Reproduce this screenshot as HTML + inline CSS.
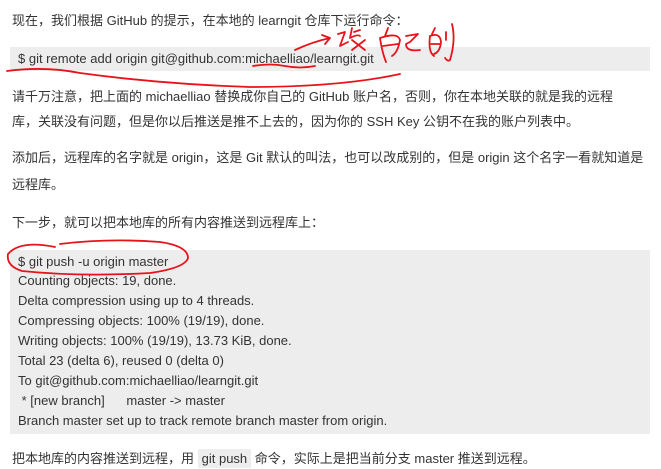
<!DOCTYPE html>
<html><head><meta charset="utf-8"><style>
body{margin:0;width:661px;height:469px;background:#fff;overflow:hidden;position:relative;font-family:"Liberation Sans","Noto Sans CJK SC",sans-serif;font-size:13px;color:#333}
.t{position:absolute;left:12px;white-space:nowrap;line-height:20px}
.code{position:absolute;left:10px;width:640px;background:#ededed}
.code div{position:absolute;left:8px;white-space:nowrap;line-height:20px}
.ic{background:#ededed;padding:2px 4px}
</style></head><body>
<div class="t" style="top:11px">现在，我们根据 GitHub 的提示，在本地的 learngit 仓库下运行命令：</div>
<div class="code" style="top:47px;height:24px"><div style="top:2px">$ git remote add origin git@github.com:michaelliao/learngit.git</div></div>
<div class="t" style="top:87px">请千万注意，把上面的 michaelliao 替换成你自己的 GitHub 账户名，否则，你在本地关联的就是我的远程</div>
<div class="t" style="top:112px">库，关联没有问题，但是你以后推送是推不上去的，因为你的 SSH Key 公钥不在我的账户列表中。</div>
<div class="t" style="top:148px">添加后，远程库的名字就是 origin，这是 Git 默认的叫法，也可以改成别的，但是 origin 这个名字一看就知道是</div>
<div class="t" style="top:175px">远程库。</div>
<div class="t" style="top:213px">下一步，就可以把本地库的所有内容推送到远程库上：</div>
<div class="code" style="top:250px;height:184px">
<div style="top:2px">$ git push -u origin master</div>
<div style="top:21px">Counting objects: 19, done.</div>
<div style="top:41px">Delta compression using up to 4 threads.</div>
<div style="top:61px">Compressing objects: 100% (19/19), done.</div>
<div style="top:81px">Writing objects: 100% (19/19), 13.73 KiB, done.</div>
<div style="top:101px">Total 23 (delta 6), reused 0 (delta 0)</div>
<div style="top:121px">To git@github.com:michaelliao/learngit.git</div>
<div style="top:141px">&nbsp;* [new branch] &nbsp; &nbsp; &nbsp;master -&gt; master</div>
<div style="top:161px">Branch master set up to track remote branch master from origin.</div>
</div>
<div class="t" style="top:449px">把本地库的内容推送到远程，用 <span class="ic">git push</span> 命令，实际上是把当前分支 master 推送到远程。</div>
<svg style="position:absolute;left:0;top:0" width="661" height="469" fill="none" stroke="#e8121b" stroke-width="1.8" stroke-linecap="round" stroke-linejoin="round">
<path d="M7 71 Q45 66 80 73 Q160 84 250 87 Q340 87 400 74"/>
<path d="M253 66 Q270 63 285 66 Q300 69 315 66"/>
<path d="M295 50 Q312 42 330 38 M322 35 L330 38 L325 44"/>
<path d="M338 34 L345 32 L340 46 L348 42 M352 28 L350 38 Q358 34 360 36 M354 32 L360 30 M352 40 L365 50 M365 40 L352 50"/>
<path d="M388 28 L385 36 M380 38 Q382 52 386 62 M380 38 Q398 32 400 40 Q398 52 392 56 M383 46 L398 44"/>
<path d="M406 36 L418 34 L410 42 L406 44 Q406 52 420 50"/>
<path d="M435 28 L432 34 M430 36 Q428 52 434 56 M430 36 Q440 32 441 42 Q440 52 434 54 M431 44 L440 44 M446 32 L446 40 M452 24 Q456 40 450 60 Q448 62 445 58"/>
<path d="M55 247 Q20 240 8 254 Q6 266 22 271 Q80 277 150 273 Q185 268 188 258 Q188 246 160 242 Q110 238 60 244"/>
</svg>
</body></html>
